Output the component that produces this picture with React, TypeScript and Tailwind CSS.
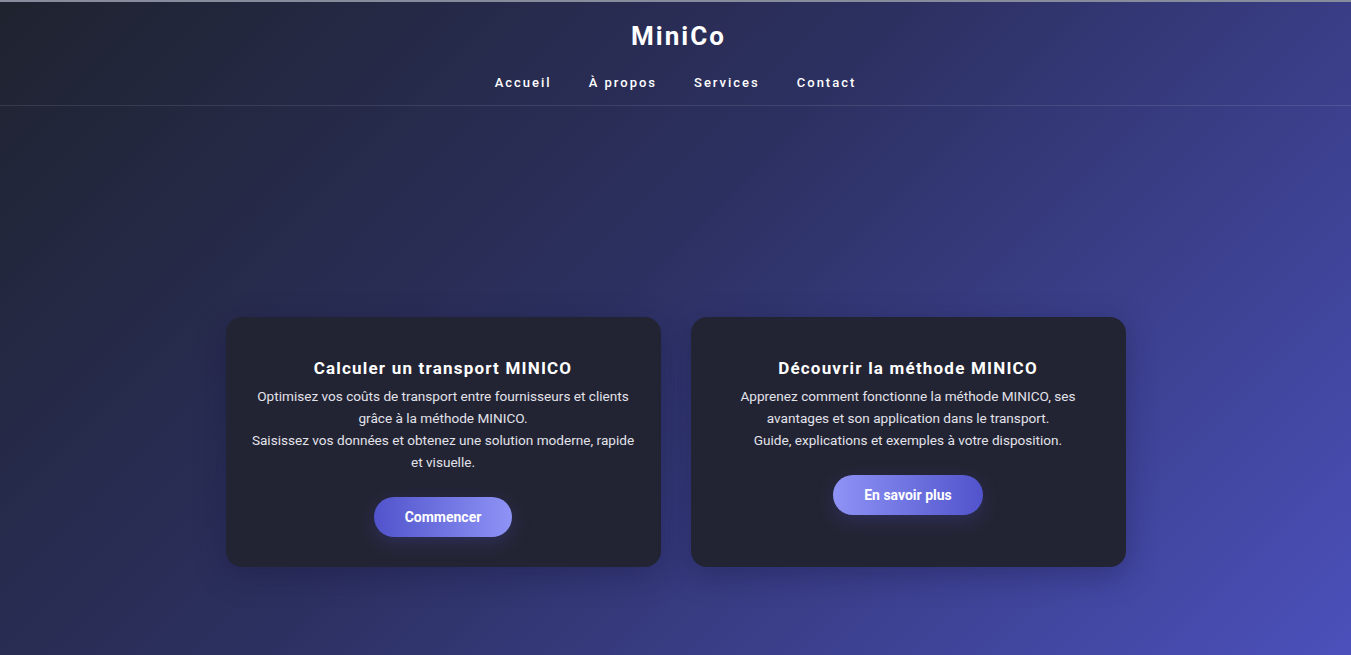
import React from "react";

const font = { fontFamily: "Roboto, 'Noto Sans', sans-serif" };

function Card({
  title,
  lines,
  button,
  reverse,
}: {
  title: string;
  lines: string[];
  button: string;
  reverse?: boolean;
}) {
  return (
    <div className="w-[435px] rounded-[16px] bg-[#232433] px-[25px] pt-[40px] pb-[30px] flex flex-col items-center text-center shadow-[0_8px_30px_rgba(20,20,60,0.35)]">
      <h2 className="text-[17px] leading-[22px] font-bold tracking-[1.2px] text-white">{title}</h2>
      <p className="mt-[6px] text-[13.6px] leading-[22px] text-[#e2e2ea]">
        {lines.map((l, i) => (
          <React.Fragment key={i}>
            {i > 0 && <br />}
            {l}
          </React.Fragment>
        ))}
      </p>
      <button
        className={
          "mt-[24px] h-[40px] rounded-full px-[31px] text-[14px] font-bold text-white shadow-[0_6px_18px_rgba(80,80,200,0.25)] " +
          (reverse
            ? "bg-gradient-to-r from-[#8f93f6] to-[#5153cb]"
            : "bg-gradient-to-r from-[#5153cb] to-[#8f93f6]")
        }
      >
        {button}
      </button>
    </div>
  );
}

export default function App() {
  return (
    <div
      style={font}
      className="min-h-[655px] w-full bg-[linear-gradient(135deg,#1f232f_0%,#2c3060_45%,#4b50bb_100%)] flex flex-col"
    >
      <div className="h-[2px] bg-[#868c9c]" />
      <header className="h-[104px] border-b border-white/10 flex flex-col items-center">
        <h1 className="mt-[17px] ml-[6px] text-[26px] leading-[34px] font-bold tracking-[2px] text-white">MiniCo</h1>
        <nav className="mt-[20px] flex gap-[37px] text-[13px] font-medium tracking-[2px] text-white">
          <a>Accueil</a>
          <a>À propos</a>
          <a>Services</a>
          <a>Contact</a>
        </nav>
      </header>
      <main className="flex justify-center gap-[30px] pt-[211px] pb-[88px]">
        <Card
          title="Calculer un transport MINICO"
          lines={[
            "Optimisez vos coûts de transport entre fournisseurs et clients grâce à la méthode MINICO.",
            "Saisissez vos données et obtenez une solution moderne, rapide et visuelle.",
          ]}
          button="Commencer"
        />
        <Card
          title="Découvrir la méthode MINICO"
          lines={[
            "Apprenez comment fonctionne la méthode MINICO, ses avantages et son application dans le transport.",
            "Guide, explications et exemples à votre disposition.",
          ]}
          button="En savoir plus"
          reverse
        />
      </main>
    </div>
  );
}
